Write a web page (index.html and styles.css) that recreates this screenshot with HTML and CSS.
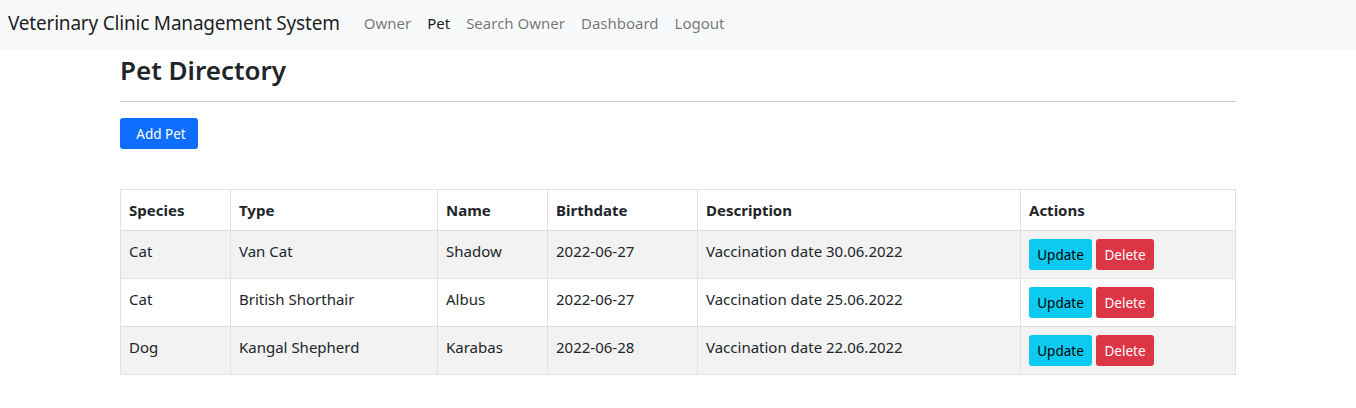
FILE: index.html
```html
<!DOCTYPE html>
<html>
<head>
<meta charset="utf-8">
<link rel="stylesheet" href="styles.css">
</head>
<body>
<nav class="navbar">
  <span class="brand">Veterinary Clinic Management System</span>
  <ul class="nav">
    <li><a class="nav-link">Owner</a></li>
    <li><a class="nav-link active">Pet</a></li>
    <li><a class="nav-link">Search Owner</a></li>
    <li><a class="nav-link">Dashboard</a></li>
    <li><a class="nav-link">Logout</a></li>
  </ul>
</nav>
<main class="container">
  <h3 class="title">Pet Directory</h3>
  <hr class="rule">
  <button class="btn btn-primary btn-add">Add Pet</button>
  <table class="table">
    <colgroup>
      <col style="width:110px">
      <col style="width:207px">
      <col style="width:110px">
      <col style="width:150px">
      <col style="width:323px">
      <col style="width:215px">
    </colgroup>
    <thead>
      <tr><th>Species</th><th>Type</th><th>Name</th><th>Birthdate</th><th>Description</th><th>Actions</th></tr>
    </thead>
    <tbody>
      <tr class="striped"><td>Cat</td><td>Van Cat</td><td>Shadow</td><td>2022-06-27</td><td>Vaccination date 30.06.2022</td><td class="actions"><button class="btn btn-info">Update</button><button class="btn btn-danger">Delete</button></td></tr>
      <tr><td>Cat</td><td>British Shorthair</td><td>Albus</td><td>2022-06-27</td><td>Vaccination date 25.06.2022</td><td class="actions"><button class="btn btn-info">Update</button><button class="btn btn-danger">Delete</button></td></tr>
      <tr class="striped"><td>Dog</td><td>Kangal Shepherd</td><td>Karabas</td><td>2022-06-28</td><td>Vaccination date 22.06.2022</td><td class="actions"><button class="btn btn-info">Update</button><button class="btn btn-danger">Delete</button></td></tr>
    </tbody>
  </table>
</main>
</body>
</html>
```

FILE: styles.css
```css
* { box-sizing: border-box; }
body {
  margin: 0;
  font-family: "Noto Sans", "Open Sans", sans-serif;
  font-size: 16px;
  color: #212529;
  background: #fff;
}
.navbar {
  height: 50px;
  background: #f8f9fa;
  display: flex;
  align-items: center;
  padding: 0 8px 4px;
}
.brand {
  font-size: 19px;
  color: rgba(0,0,0,.9);
  margin-right: 16px;
  letter-spacing: -0.2px;
}
.nav {
  list-style: none;
  margin: 0;
  padding: 0;
  display: flex;
}
.nav-link {
  display: block;
  padding: 8px 8px;
  font-size: 15px;
  color: rgba(0,0,0,.55);
}
.nav-link.active { color: rgba(0,0,0,.9); }
.container {
  width: 1140px;
  margin: 0 auto;
  padding: 0 12px;
}
.title {
  margin: 0;
  font-size: 26px;
  font-weight: 600;
  line-height: 40px;
}
.rule {
  margin: 11px 0 16px;
  border: 0;
  border-top: 1px solid #c8c8c8;
}
.btn {
  font-family: inherit;
  border: 1px solid transparent;
  border-radius: 3px;
  font-size: 13.5px;
  line-height: 20px;
  padding: 4px 8px;
  cursor: pointer;
}
.btn-primary { background: #0d6efd; color: #fff; }
.btn-add { width: 78px; height: 31px; padding: 0 0 0 4px; }
.btn-info { background: #0dcaf0; color: #000; width: 63px; height: 31px; padding: 0; }
.btn-danger { background: #dc3545; color: #fff; width: 58px; height: 31px; padding: 0; margin-left: 4px; }
.table {
  margin-top: 40px;
  width: 1115px;
  border-collapse: collapse;
  table-layout: fixed;
}
.table th, .table td {
  border: 1px solid #dee2e6;
  text-align: left;
  padding: 10px 8px 8px;
  vertical-align: top;
  font-size: 15px;
}
.table th {
  font-weight: 700;
  height: 41px;
  padding-top: 10px;
}
.table td { height: 48px; }
.table tr.striped td { background: #f2f2f2; }
.table td.actions { padding-top: 8px; padding-bottom: 0; }
```
